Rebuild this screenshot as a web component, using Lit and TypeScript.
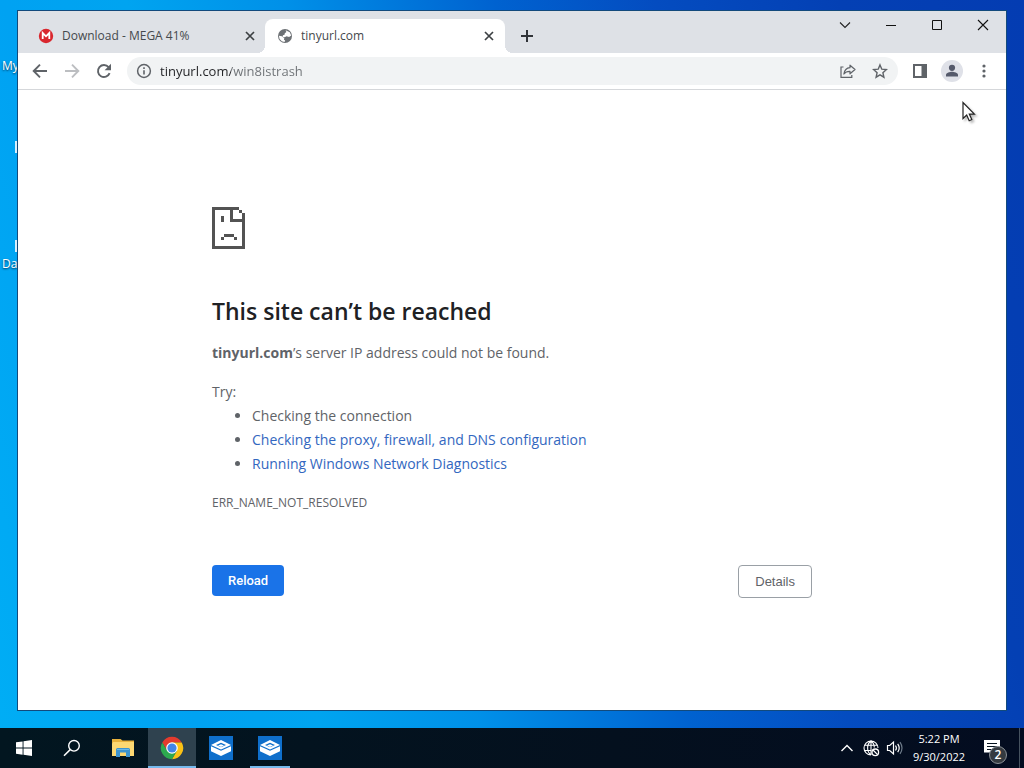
import { LitElement, html, svg, css } from "lit";
import { customElement } from "lit/decorators.js";

const mega = svg`<svg width="16" height="16" viewBox="0 0 16 16"><circle cx="8" cy="8" r="7.2" fill="#d9272e"/><path d="M4.7 11V5l3.3 3.3L11.3 5v6" fill="none" stroke="#fff" stroke-width="1.8"/></svg>`;
const earth = svg`<svg width="16" height="16" viewBox="0 0 16 16"><circle cx="8" cy="8" r="7" fill="#6d7175"/><path d="M8.6 2.3l4.2 1.9 1.4 3.3-2.1 1.4-2.6-.7-1.7 1-2.1-.3.2-1.7 1.6-.5.3-1.5L9.400 4z" fill="#fff"/><path d="M1.900 7.800l3.100.5 2.300 1.900-.4 1.600 1.300.7-.7 1.500-2.700-.8-2.200-2.300z" fill="#fff"/></svg>`;
const cross = svg`<svg width="12" height="12" viewBox="0 0 12 12"><path d="M2 2l8 8M10 2l-8 8" stroke="#3c4043" stroke-width="1.700"/></svg>`;
const plus = svg`<svg width="14" height="14" viewBox="0 0 14 14"><path d="M7 1v12M1 7h12" stroke="#303338" stroke-width="2"/></svg>`;
const back = svg`<svg width="16" height="16" viewBox="0 0 16 16"><path d="M15 8H2M8 1.700L1.700 8 8 14.300" fill="none" stroke="currentColor" stroke-width="1.900"/></svg>`;
const forward = svg`<svg width="16" height="16" viewBox="0 0 16 16"><path d="M1 8h13M8 1.700L14.300 8 8 14.300" fill="none" stroke="currentColor" stroke-width="1.900"/></svg>`;
const reload = svg`<svg width="16" height="16" viewBox="0 0 16 16"><path d="M13.600 10.200A6 6 0 1 1 12.600 4.200L14 5.600" fill="none" stroke="currentColor" stroke-width="1.900"/><path d="M15 .8v6.400H8.600z" fill="currentColor"/></svg>`;
const info = svg`<svg width="16" height="16" viewBox="0 0 16 16"><circle cx="8" cy="8" r="6.400" fill="none" stroke="#5f6368" stroke-width="1.500"/><path d="M8 7.200v4.300M8 4.300v1.600" stroke="#5f6368" stroke-width="1.600"/></svg>`;
const share = svg`<svg width="16" height="16" viewBox="0 0 16 16" fill="none" stroke="currentColor" stroke-width="1.200"><path d="M3.500 4H1v10.400h10.800V12"/><path d="M10 2.200l5 4.300-5 4.300V8.300C7 8.200 5.300 9.100 3.900 11c.5-3.500 2.500-6 6.100-6.300z" stroke-linejoin="round"/></svg>`;
const star = svg`<svg width="16" height="16" viewBox="0 0 16 16"><path d="M8 1.900l1.800 4.300 4.600.4-3.500 3.100 1 4.500L8 11.800l-3.900 2.400 1-4.500L1.600 6.600l4.600-.4z" fill="none" stroke="currentColor" stroke-width="1.400"/></svg>`;
const panel = svg`<svg width="16" height="16" viewBox="0 0 16 16"><path d="M1 1h14v14H1zM3 3v10h6.500V3z" fill="currentColor" fill-rule="evenodd"/></svg>`;
const person = svg`<svg width="22" height="22" viewBox="0 0 22 22"><circle cx="11" cy="11" r="11" fill="#dfe1e8"/><circle cx="11" cy="7.800" r="3.100" fill="#555a6b"/><path d="M5 16.500v-1.700c0-2 4-3 6-3s6 1 6 3v1.700z" fill="#555a6b"/></svg>`;
const dots = svg`<svg width="16" height="16" viewBox="0 0 16 16" fill="currentColor"><circle cx="8" cy="3" r="1.600"/><circle cx="8" cy="8" r="1.600"/><circle cx="8" cy="13" r="1.600"/></svg>`;
const chevronDown = svg`<svg width="12" height="12" viewBox="0 0 12 12"><path d="M1 3.500l5 5 5-5" fill="none" stroke="#222" stroke-width="1.100"/></svg>`;
const minimize = svg`<svg width="12" height="12" viewBox="0 0 12 12"><path d="M1 6.500h10" stroke="#111"/></svg>`;
const maximize = svg`<svg width="12" height="12" viewBox="0 0 12 12"><path d="M1.500 1.500h9v9h-9z" fill="none" stroke="#111"/></svg>`;
const closeIcon = svg`<svg width="12" height="12" viewBox="0 0 12 12"><path d="M1 1l10 10M11 1L1 11" stroke="#111" stroke-width="1.100"/></svg>`;
const sadPage = svg`<svg width="33" height="42" viewBox="0 0 33 42" fill="#535353" shape-rendering="crispEdges"><path d="M0 0h27v3H21v9h12v30H0zM3 3v36h27V15H18V3zM27 3h3v3h-3zM30 6h3v6h-3zM9 9h3v6H9zM12 27h10v3H12zM9 30h3v3H9zM22 30h3v3h-3z" fill-rule="evenodd"/></svg>`;
const cursor = svg`<svg width="18" height="24" viewBox="0 0 18 24"><path d="M2 1.500v16l3.700-3.500 2.500 5.700 2.600-1.200-2.500-5.400h5.100z" fill="#fff" stroke="#222" stroke-width="1.200"/></svg>`;

const windows = svg`<svg width="16" height="16" viewBox="0 0 16 16" fill="#fff"><path d="M0 2.300L6.600 1.400v6.200H0zM7.500 1.300L16 0v7.600H7.500zM0 8.500h6.600v6.200L0 13.800zM7.500 8.500H16V16l-8.500-1.200z"/></svg>`;
const search = svg`<svg width="18" height="18" viewBox="0 0 18 18" fill="none" stroke="#fff"><circle cx="11" cy="6.800" r="5.300" stroke-width="1.400"/><path d="M7.200 10.600L1 16.800" stroke-width="1.500"/></svg>`;
const folder = svg`<svg width="22" height="20" viewBox="0 0 22 20"><path d="M0 1h8.500l2 1.500H22V18H0z" fill="#e9b23c"/><path d="M1 4h21v14H0V6z" fill="#fdd872"/><path d="M4 19v-7.500q0-1.500 1.500-1.500h11q1.500 0 1.500 1.500V19h-4v-4.500H8V19z" fill="#3d94cf"/><path d="M5 11.500h12" stroke="#6cb9e6"/></svg>`;
const chrome = svg`<svg width="24" height="24" viewBox="0 0 24 24"><path d="M2.300 6.400A11.200 11.200 0 0 1 21.700 6.400H12L7.150 14.800z" fill="#e33b2e"/><path d="M21.700 6.400H12l4.850 8.400L12 23.200A11.200 11.200 0 0 0 21.700 6.400z" fill="#fbc116"/><path d="M2.300 6.400l4.850 8.400h9.700L12 23.200A11.200 11.200 0 0 1 2.300 6.400z" fill="#2da94f"/><circle cx="12" cy="12" r="5.800" fill="#fff"/><circle cx="12" cy="12" r="4.600" fill="#4285e8"/></svg>`;
const sandbox = svg`<svg width="24" height="24" viewBox="0 0 24 24"><path d="M0 0h24v24H0z" fill="#0f6fcb"/><path d="M12 4l10 5-10 4.500L2 9z" fill="#fff"/><path d="M7 9l5-2.200L17 9l-5 2.200z" fill="#0f6fcb"/><path d="M9 9.600L12 8.300l3 1.300-3 1.300z" fill="#fff"/><path d="M2 10.200l10 4.600 10-4.600v5L12 20 2 15.200z" fill="#fff"/></svg>`;
const chevronUp = svg`<svg width="14" height="14" viewBox="0 0 14 14"><path d="M1.500 10L7 4.500l5.500 5.500" fill="none" stroke="#fff" stroke-width="1.400"/></svg>`;
const network = svg`<svg width="18" height="18" viewBox="0 0 18 18" fill="none" stroke="#fff" stroke-width="1.100"><path d="M9 16A7 7 0 1 1 16 9M9 16c-4.500-3-4.500-11 0-14M9 2c2.200 1.500 3.300 4 3.300 6.500M2.600 6.300h12.800M2.600 11.500H9M9 2v14"/><circle cx="13.300" cy="13.300" r="3.300" stroke-width="1.300"/><path d="M11 11l4.600 4.600" stroke-width="1.300"/></svg>`;
const volume = svg`<svg width="18" height="16" viewBox="0 0 18 16" fill="none" stroke="#fff" stroke-width="1.200"><path d="M1.500 5.500h2.200L7.500 2v12L3.700 10.500H1.500z"/><path d="M9.500 5.500q1.800 2.500 0 5M11.700 3.800q3 4.200 0 8.400"/><path d="M14 2.200q4 5.800 0 11.600" stroke="#6d7a88"/></svg>`;
const note = svg`<svg width="18" height="18" viewBox="0 0 18 18"><path d="M1 1h16v12.500h-6.500L7 17v-3.500H1z" fill="#fff"/><path d="M4 4.500h10M4 7.500h10M4 10.500h6" stroke="#06131f" stroke-width="1.200"/></svg>`;

@customElement("app-root")
export class AppRoot extends LitElement {
  static styles = css`
    :host { display: flex; flex-direction: column; height: 100vh; min-height: 640px; overflow: hidden; position: relative;
      font-family: "Open Sans", "Noto Sans", sans-serif; font-size: 12px; color: #5f6368;
      background: linear-gradient(75deg, #00aef5 0%, #00a2f2 17%, #00a4f0 27%, #0090e8 40%, #0062d0 57%, #044cc0 70%, #0440b4 85%, #043cb2 100%); }
    * { box-sizing: border-box; }
    svg { display: block; flex: none; }
    button { display: flex; align-items: center; justify-content: center; flex: none; padding: 0; border: 0; background: none; color: #5f6368; font: inherit; }
    .desktop { flex: 1; min-height: 0; padding: 10px 17px 17px; display: flex; }
    .shortcut { position: absolute; left: 2px; color: #fff; line-height: 16px; text-shadow: 0 1px 2px #035; white-space: nowrap; }
    .my { top: 58px; }
    .da { top: 256px; }
    .edge { position: absolute; left: 15px; width: 2px; height: 12px; background: #d9effc; }
    .edge1 { top: 141px; }
    .edge2 { top: 240px; }
    .window { position: relative; flex: 1; min-width: 0; display: flex; flex-direction: column; background: #fff; border: 1px solid #124a7c; overflow: hidden; }
    .strip { display: flex; height: 42px; background: #dee1e6; padding-left: 8px; flex: none; }
    .tab { position: relative; display: flex; align-items: center; width: 240px; min-width: 80px; margin-top: 8px; padding: 0 10px 0 12px; gap: 8px; border-radius: 8px 8px 0 0; color: #45494d; }
    .tab .title { flex: 1; white-space: nowrap; overflow: hidden; line-height: 18px; }
    .first { width: 239px; padding-right: 9px; }
    .active { background: #fff; }
    .active::before, .active::after { content: ""; position: absolute; bottom: 0; width: 8px; height: 8px; }
    .active::before { right: 100%; background: radial-gradient(circle at 0 0, transparent 8px, #fff 8px); }
    .active::after { left: 100%; background: radial-gradient(circle at 100% 0, transparent 8px, #fff 8px); }
    .new { width: 28px; height: 28px; margin: 11px 0 0 8px; }
    .controls { display: flex; margin-left: auto; }
    .controls button { width: 46px; height: 28px; }
    .toolbar { display: flex; align-items: center; height: 37px; padding: 0 6px; border-bottom: 1px solid #d5d7da; flex: none; }
    .tool { width: 32px; height: 32px; }
    .off { color: #bcbec1; }
    .omnibox { flex: 1; min-width: 0; display: flex; align-items: center; height: 28px; margin: 0 6px 0 7px; padding: 0 2px 0 9px; border-radius: 14px; background: #f1f3f4; }
    .url { flex: 1; min-width: 0; height: 24px; margin-left: 8px; border: 0; padding: 0; outline: 0; font: 13px/24px "Open Sans", "Noto Sans", sans-serif; color: #3c4043;
      background: linear-gradient(90deg, #202124 71px, #6c7074 71px); -webkit-background-clip: text; background-clip: text; -webkit-text-fill-color: transparent; }
    .page { flex: 1; width: 100%; max-width: 600px; margin: 0 auto; padding-top: 117px; font-size: 14px; line-height: 24px; }
    h1 { margin: 47px 0 15px; font-size: 23px; line-height: 30px; font-weight: 600; color: #202124; }
    p { margin: 0; }
    .try { margin-top: 15px; }
    ul { margin: 0; padding-left: 40px; }
    a { color: #3367c0; text-decoration: none; }
    .code { margin-top: 15px; font-size: 12px; }
    .actions { display: flex; justify-content: space-between; align-items: flex-start; margin-top: 50px; }
    .actions button { font: 13px/15px "Liberation Sans", Arial, sans-serif; padding: 8px 16px; border-radius: 4px; }
    .actions .primary { background: #1a73e8; color: #fff; font: 500 13px/15px Roboto, "Liberation Sans", sans-serif; }
    .actions .plain { border: 1px solid #9aa0a6; }
    .cursor { position: absolute; left: 943px; top: 90px; filter: drop-shadow(2px 2px 1px #0004); }
    .taskbar { display: flex; height: 40px; flex: none; background: linear-gradient(90deg, #021620, #04101e 60%, #030c20); color: #fff; }
    .taskbar button { width: 48px; color: #fff; }
    .apps { display: flex; gap: 1px; margin-left: 3px; }
    .taskbar .current { background: #2f424f; border-bottom: 2px solid #76b9ed; padding-top: 2px; }
    .running { position: relative; }
    .running::after { content: ""; position: absolute; left: 4px; right: 4px; bottom: 0; height: 2px; background: #76b9ed; }
    .tray { display: flex; margin-left: auto; }
    .tray .status { width: 24px; }
    .tray .clock { width: 64px; display: block; text-align: center; line-height: 18px; font-size: 11px; white-space: nowrap; }
    .tray .notes { width: 42px; position: relative; margin-right: 6px; }
    .badge { position: absolute; left: 18px; top: 18px; width: 18px; height: 18px; border: 1px solid #8b9197; border-radius: 50%; background: #343a40; font: 600 12px/16px "Open Sans", sans-serif; text-align: center; }
    .peek { width: 5px; border-left: 1px solid #46525f; }
  `;

  render() {
    return html`
      <span class="shortcut my">My</span><span class="edge edge1"></span>
      <span class="edge edge2"></span><span class="shortcut da">Da</span>
      <main class="desktop">
        <section class="window">
          <div class="strip">
            <div class="tab first">${mega}<span class="title">Download - MEGA 41%</span><button aria-label="Close tab">${cross}</button></div>
            <div class="tab active">${earth}<span class="title">tinyurl.com</span><button aria-label="Close tab">${cross}</button></div>
            <button class="new" aria-label="New tab">${plus}</button>
            <div class="controls">
              <button aria-label="Search tabs">${chevronDown}</button>
              <button aria-label="Minimize">${minimize}</button>
              <button aria-label="Maximize">${maximize}</button>
              <button aria-label="Close">${closeIcon}</button>
            </div>
          </div>
          <div class="toolbar">
            <button class="tool" aria-label="Back">${back}</button>
            <button class="tool off" aria-label="Forward">${forward}</button>
            <button class="tool" aria-label="Reload page">${reload}</button>
            <div class="omnibox">
              ${info}
              <input class="url" aria-label="Address" value="tinyurl.com/win8istrash" spellcheck="false" />
              <button class="tool" aria-label="Share">${share}</button>
              <button class="tool" aria-label="Bookmark">${star}</button>
            </div>
            <button class="tool" aria-label="Side panel">${panel}</button>
            <button class="tool" aria-label="Profile">${person}</button>
            <button class="tool" aria-label="Menu">${dots}</button>
          </div>
          <article class="page">
            ${sadPage}
            <h1>This site can’t be reached</h1>
            <p><strong>tinyurl.com</strong>’s server IP address could not be found.</p>
            <p class="try">Try:</p>
            <ul>
              <li>Checking the connection</li>
              <li><a href="#proxy">Checking the proxy, firewall, and DNS configuration</a></li>
              <li><a href="#diagnostics">Running Windows Network Diagnostics</a></li>
            </ul>
            <p class="code">ERR_NAME_NOT_RESOLVED</p>
            <div class="actions">
              <button class="primary">Reload</button>
              <button class="plain">Details</button>
            </div>
          </article>
          <div class="cursor">${cursor}</div>
        </section>
      </main>
      <footer class="taskbar">
        <button aria-label="Start">${windows}</button>
        <button aria-label="Search">${search}</button>
        <div class="apps">
          <button aria-label="File Explorer">${folder}</button>
          <button class="current" aria-label="Chrome">${chrome}</button>
          <button aria-label="Windows Sandbox">${sandbox}</button>
          <button class="running" aria-label="Windows Sandbox window">${sandbox}</button>
        </div>
        <div class="tray">
          <button class="status" aria-label="Hidden icons">${chevronUp}</button>
          <button class="status" aria-label="Network">${network}</button>
          <button class="status" aria-label="Volume">${volume}</button>
          <button class="clock">5:22 PM<br />9/30/2022</button>
          <button class="notes" aria-label="Notifications">${note}<span class="badge">2</span></button>
          <div class="peek"></div>
        </div>
      </footer>
    `;
  }
}
